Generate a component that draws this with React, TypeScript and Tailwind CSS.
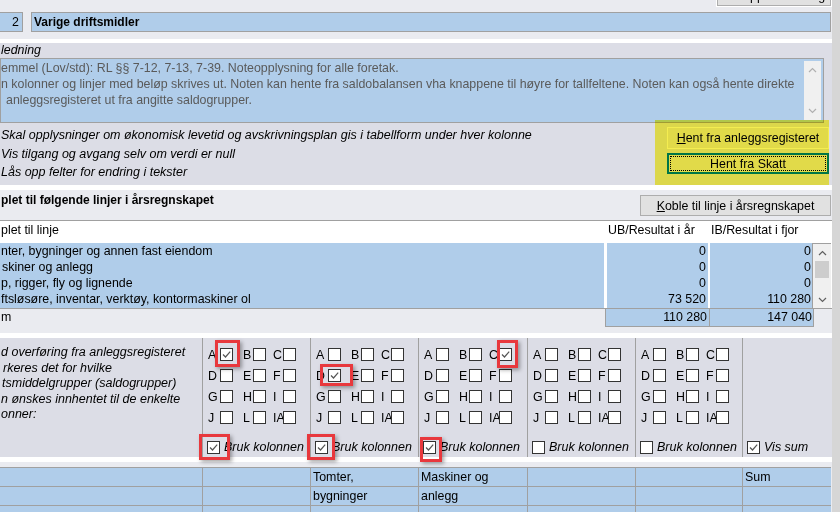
import React from "react"

const LETTERS = [
  ["A", "B", "C"],
  ["D", "E", "F"],
  ["G", "H", "I"],
  ["J", "L", "IA"],
]

// width of every saldogruppe column, left edge at x 202
const colWidths = ["w-[108px]", "w-[108px]", "w-[109px]", "w-[108px]", "w-[107px]"]

const groupCols = [
  { checked: "A", bruk: true },
  { checked: "D", bruk: true },
  { checked: "C", bruk: true },
  { checked: "", bruk: false },
  { checked: "", bruk: false },
]

const accountRows = [
  { label: "nter, bygninger og annen fast eiendom", ub: "0", ib: "0", pad: "pl-[1px]" },
  { label: "skiner og anlegg", ub: "0", ib: "0", pad: "pl-[2px]" },
  { label: "p, rigger, fly og lignende", ub: "0", ib: "0", pad: "pl-[1px]" },
  { label: "ftsløsøre, inventar, verktøy, kontormaskiner ol", ub: "73 520", ib: "110 280", pad: "pl-[1px]" },
]

// red marker boxes drawn on top of the screenshot
const markers = [
  "left-[215px] top-[340px] w-[25px] h-[27px]",
  "left-[320px] top-[364px] w-[33px] h-[22px]",
  "left-[497px] top-[340px] w-[21px] h-[28px]",
  "left-[199px] top-[434px] w-[31px] h-[26px]",
  "left-[307px] top-[434px] w-[28px] h-[26px]",
  "left-[420px] top-[437px] w-[22px] h-[25px]",
]

function Box({ checked }: { checked?: boolean }) {
  return (
    <span className="inline-flex h-[13px] w-[13px] shrink-0 items-center justify-center border border-[#333] bg-white">
      {checked && (
        <svg width="11" height="11" viewBox="0 0 11 11">
          <path d="M2 5.5 L4.5 8 L9.2 2.6" fill="none" stroke="#555" strokeWidth="1.2" />
        </svg>
      )}
    </span>
  )
}

function Chevron({ up, color }: { up?: boolean; color: string }) {
  return (
    <svg width="9" height="6" viewBox="0 0 9 6">
      <path d={up ? "M1 5 L4.5 1.5 L8 5" : "M1 1 L4.5 4.5 L8 1"} fill="none" stroke={color} strokeWidth="1.2" />
    </svg>
  )
}

export default function App() {
  return (
    <div className="relative flex h-[512px] w-[840px] overflow-hidden bg-[#eaebf0] font-['Liberation_Sans',Arial,sans-serif] text-[12.4px] text-black">
      <div className="w-[832px] shrink-0">
        {/* top, button cut off */}
        <div className="flex h-[12px] justify-end pr-[1px]">
          <button className="-mt-[18px] h-[24px] w-[114px] border border-[#adadad] bg-[#e1e1e1] pt-[4px] leading-[16px] outline outline-1 outline-white">
            Vis oppsummering
          </button>
        </div>

        {/* note title */}
        <div className="flex h-[20px] pr-[1px]">
          <div className="-ml-px w-[24px] border border-[#a0a0a0] bg-[#b0cdea] pr-[3px] text-right leading-[18px]">2</div>
          <div className="ml-[8px] flex-1 border border-[#a0a0a0] bg-[#b0cdea] pl-[2px] text-[12px] font-bold leading-[18px]">
            Varige driftsmidler
          </div>
        </div>
        <div className="h-[7px]" />
        <div className="h-[4px] bg-white" />

        {/* Innledning */}
        <div className="relative flex h-[142px] flex-col bg-[#dcdde6]">
          <div className="h-[15px] shrink-0 pl-[1px] italic leading-[15px]">ledning</div>
          <div className="mr-[8px] flex h-[65px] shrink-0 border border-[#a0a0a0] bg-[#b0cdea]">
            <div className="flex-1 pt-[1px] leading-[16px] text-[#5a5a5a]">
              <div>emmel (Lov/std): RL §§ 7-12, 7-13, 7-39. Noteopplysning for alle foretak.</div>
              <div>n kolonner og linjer med beløp skrives ut. Noten kan hente fra saldobalansen vha knappene til høyre for tallfeltene. Noten kan også hente direkte</div>
              <div className="pl-[5px]">anleggsregisteret ut fra angitte saldogrupper.</div>
            </div>
            <div className="my-[2px] mr-[2px] flex w-[17px] flex-col items-center justify-between bg-[#f0f0f0] py-[6px]">
              <Chevron up color="#b0b0b0" />
              <Chevron color="#b0b0b0" />
            </div>
          </div>
          <div className="flex flex-1">
            <div className="flex-1 pl-[1px] pt-[3px] text-[12.5px] italic leading-[18.5px]">
              <div>Skal opplysninger om økonomisk levetid og avskrivningsplan gis i tabellform under hver kolonne</div>
              <div>Vis tilgang og avgang selv om verdi er null</div>
              <div>Lås opp felter for endring i tekster</div>
            </div>
            <div className="mr-[3px] flex w-[162px] flex-col gap-[4px] pt-[4px]">
              <button className="h-[22px] border border-[#f4f4f4] bg-[#e1e1e1] leading-[18px]">
                <u>H</u>ent fra anleggsregisteret
              </button>
              <button className="h-[21px] border-2 border-[#0078d7] bg-[#e1e1e1] p-px">
                <span className="flex h-full items-center justify-center border border-dotted border-black leading-[14px]">
                  Hent fra Skatt
                </span>
              </button>
            </div>
          </div>
          {/* highlighter */}
          <div className="absolute left-[655px] top-[77px] h-[65px] w-[174px] bg-[#fff853] mix-blend-multiply" />
        </div>
        <div className="h-[5px] bg-white" />

        {/* Koblet til linjer */}
        <div className="flex h-[30px] items-start justify-between pt-[5px]">
          <div className="-mt-[2px] pl-[1px] text-[12px] font-bold leading-[14px]">plet til følgende linjer i årsregnskapet</div>
          <button className="mr-[1px] h-[21px] w-[191px] border border-[#adadad] bg-[#e1e1e1] leading-[18px]">
            <u>K</u>oble til linje i årsregnskapet
          </button>
        </div>
        <div className="flex h-[23px] border-t border-[#a0a0a0] bg-white pt-[1px] leading-[16px]">
          <div className="w-[607px] pl-[1px]">plet til linje</div>
          <div className="w-[103px] pl-[1px]">UB/Resultat i år</div>
          <div className="flex-1 pl-[1px]">IB/Resultat i fjor</div>
        </div>
        <div className="flex h-[65px] bg-white leading-[16px]">
          <div className="w-[604px] bg-[#b0cdea]">
            {accountRows.map((r) => (
              <div key={r.label} className={r.pad}>{r.label}</div>
            ))}
          </div>
          <div className="ml-[3px] w-[101px] bg-[#b0cdea] pr-[2px] text-right">
            {accountRows.map((r, i) => (
              <div key={i}>{r.ub}</div>
            ))}
          </div>
          <div className="ml-[2px] w-[102px] bg-[#b0cdea] pr-[1px] text-right">
            {accountRows.map((r, i) => (
              <div key={i}>{r.ib}</div>
            ))}
          </div>
          <div className="flex w-[19px] flex-col items-center border-l border-t border-[#a0a0a0] bg-[#f0f0f0]">
            <div className="flex h-[17px] items-center">
              <Chevron up color="#606060" />
            </div>
            <div className="h-[17px] w-[14px] bg-[#cdcdcd]" />
            <div className="flex-1" />
            <div className="flex h-[17px] items-center">
              <Chevron color="#606060" />
            </div>
          </div>
        </div>
        <div className="flex h-[25px] border-t border-[#a0a0a0] leading-[17px]">
          <div className="w-[605px] pl-[1px]">m</div>
          <div className="flex h-[18px]">
            <div className="w-[105px] border border-t-0 border-[#a0a0a0] bg-[#b0cdea] pr-[2px] text-right">110 280</div>
            <div className="w-[104px] border border-l-0 border-t-0 border-[#a0a0a0] bg-[#b0cdea] pr-[1px] text-right">147 040</div>
          </div>
        </div>
        <div className="h-[5px] bg-white" />

        {/* saldogrupper */}
        <div className="flex h-[119px] bg-[#dcdde6]">
          <div className="w-[202px] pl-[1px] pt-[7px] text-[12.5px] italic leading-[15.5px]">
            <div>d overføring fra anleggsregisteret</div>
            <div className="pl-[2px]">rkeres det for hvilke</div>
            <div className="pl-[1px]">tsmiddelgrupper (saldogrupper)</div>
            <div>n ønskes innhentet til de enkelte</div>
            <div>onner:</div>
          </div>
          {groupCols.map((col, ci) => (
            <div key={ci} className={`flex ${colWidths[ci]} flex-col justify-between border-l border-[#a0a0a0] pt-[6px]`}>
              <div>
                {LETTERS.map((row, ri) => (
                  <div key={ri} className="flex h-[21px] items-center pl-[5px]">
                    {row.map((l, li) => (
                      <div key={l} className={`flex items-center ${li === 0 ? "w-[35px]" : "w-[30px]"}`}>
                        <span className={`${li === 0 ? "w-[12px]" : "w-[10px]"} shrink-0 whitespace-nowrap leading-[14px]`}>{l}</span>
                        <Box checked={col.checked === l} />
                      </div>
                    ))}
                  </div>
                ))}
              </div>
              <div className="flex h-[20px] items-center gap-[4px] pl-[4px] text-[12.5px] italic">
                <Box checked={col.bruk} />
                <span className="whitespace-nowrap">Bruk kolonnen</span>
              </div>
            </div>
          ))}
          <div className="flex flex-1 flex-col justify-end border-l border-[#a0a0a0]">
            <div className="flex h-[20px] items-center gap-[4px] pl-[4px] text-[12.5px] italic">
              <Box checked />
              <span>Vis sum</span>
            </div>
          </div>
        </div>
        <div className="h-[5px] bg-white" />
        <div className="h-[5px]" />

        {/* kolonnetabell */}
        <div className="mr-[1px] grid grid-cols-[202px_107px_107px_108px_107px_106px_1fr] gap-px border-t border-[#a0a0a0] bg-[#a0a0a0] leading-[18px]">
          {[
            ["", "", "Tomter,", "Maskiner og", "", "", "Sum"],
            ["", "", "bygninger", "anlegg", "", "", ""],
            ["", "", "og annen", "", "", "", ""],
          ].flatMap((row, ri) =>
            row.map((t, ci) => (
              <div key={`${ri}-${ci}`} className="h-[18px] bg-[#b0cdea] pl-[2px]">
                {t}
              </div>
            ))
          )}
        </div>
      </div>
      <div className="w-[8px] bg-[#d6d6d6]" />

      {markers.map((m) => (
        <div
          key={m}
          className={`absolute ${m} border-[3px] border-[#e8383d] shadow-[2px_2px_4px_rgba(0,0,0,0.35)]`}
        />
      ))}
    </div>
  )
}
